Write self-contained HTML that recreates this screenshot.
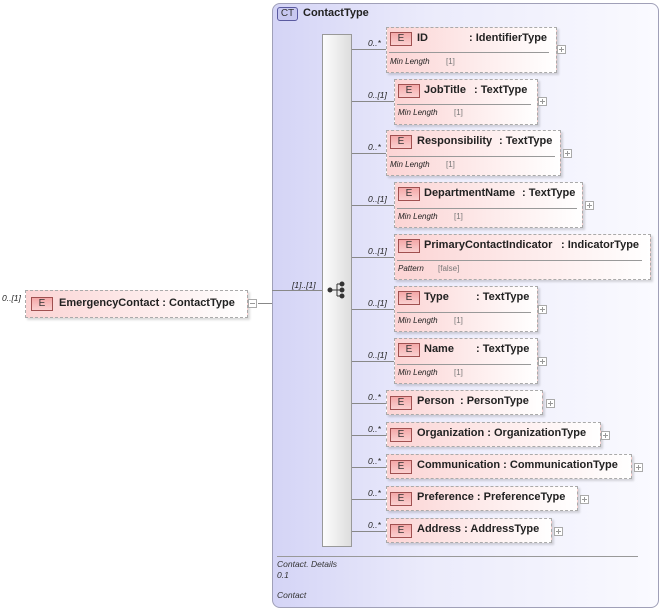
<!DOCTYPE html>
<html><head><meta charset="utf-8"><style>
*{margin:0;padding:0;box-sizing:border-box}
body{width:662px;height:610px;background:#fff;position:relative;overflow:hidden;font-family:"Liberation Sans",Arial,sans-serif;color:#222}
.abs{position:absolute}
.ct{left:272px;top:3px;width:387px;height:605px;border:1px solid #a0a0b8;border-radius:8px;background:linear-gradient(to right,#d4d4f6 0%,#ebebfb 40%,#fafaff 100%)}
.ctb{left:277px;top:7px;width:21px;height:14px;border:1px solid #5a5aa0;border-radius:3px;background:#c8c8f0;font-size:10px;text-align:center;line-height:12px;color:#333}
.ctt{left:303px;top:7px;font-size:11px;font-weight:bold}
.seq{left:322px;top:34px;width:30px;height:513px;border:1px solid #999;background:linear-gradient(to right,#fdfdfd,#ddd)}
.box{position:absolute;border:1px dashed #aaa;background:linear-gradient(to right,#fcd4d4,#fdeaea 50%,#fff);box-shadow:2px 2px 2px rgba(0,0,0,.15)}
.e{position:absolute;width:22px;height:14px;border:1px solid #a05050;background:linear-gradient(#f4a8a8,#fad0d0);font-size:10px;text-align:center;line-height:12px;color:#333}
.t{position:absolute;font-size:11px;font-weight:bold;white-space:nowrap}
.sep{position:absolute;height:1px;background:#999}
.d{position:absolute;font-size:8px;font-style:italic;white-space:nowrap}
.dv{position:absolute;font-size:8px;color:#777;white-space:nowrap}
.hl{position:absolute;height:1px;background:#888}
.m{position:absolute;font-size:8.5px;font-style:italic;white-space:nowrap}
.pl{position:absolute;width:9px;height:9px;border:1px solid #aaa;background:#fff}
.pl:before{content:"";position:absolute;left:1px;top:3px;width:5px;height:1px;background:#999}
.pl.p:after{content:"";position:absolute;left:3px;top:1px;width:1px;height:5px;background:#999}
.f{position:absolute;font-size:8.5px;font-style:italic;color:#333}
</style></head><body>
<div class="abs ct"></div>
<div class="abs ctb">CT</div>
<div class="abs ctt">ContactType</div>
<div class="abs seq"></div>
<svg class="abs" style="left:326px;top:280px" width="22" height="20"><g stroke="#333" fill="#333"><line x1="4" y1="10" x2="11" y2="10"/><line x1="11" y1="4" x2="11" y2="16"/><line x1="11" y1="4" x2="16" y2="4"/><line x1="11" y1="10" x2="16" y2="10"/><line x1="11" y1="16" x2="16" y2="16"/><circle cx="4" cy="10" r="2"/><circle cx="16" cy="4" r="2"/><circle cx="16" cy="10" r="2"/><circle cx="16" cy="16" r="2"/></g></svg>

<div class="m" style="left:2px;top:293px">0..[1]</div>
<div class="box" style="left:25px;top:290px;width:223px;height:28px"></div>
<div class="e" style="left:31px;top:297px">E</div>
<div class="t" style="left:59px;top:297px">EmergencyContact : ContactType</div>
<div class="pl" style="left:248px;top:299px"></div>
<div class="hl" style="left:258px;top:303px;width:14px"></div>
<div class="hl" style="left:272px;top:290px;width:50px"></div>
<div class="m" style="left:292px;top:280px">[1]..[1]</div>

<div class="hl" style="left:352px;top:49px;width:34px"></div>
<div class="hl" style="left:352px;top:101px;width:42px"></div>
<div class="hl" style="left:352px;top:153px;width:34px"></div>
<div class="hl" style="left:352px;top:205px;width:42px"></div>
<div class="hl" style="left:352px;top:257px;width:42px"></div>
<div class="hl" style="left:352px;top:309px;width:42px"></div>
<div class="hl" style="left:352px;top:361px;width:42px"></div>
<div class="hl" style="left:352px;top:403px;width:34px"></div>
<div class="hl" style="left:352px;top:435px;width:34px"></div>
<div class="hl" style="left:352px;top:467px;width:34px"></div>
<div class="hl" style="left:352px;top:499px;width:34px"></div>
<div class="hl" style="left:352px;top:531px;width:34px"></div>

<div class="m" style="left:368px;top:38px">0..*</div>
<div class="m" style="left:368px;top:90px">0..[1]</div>
<div class="m" style="left:368px;top:142px">0..*</div>
<div class="m" style="left:368px;top:194px">0..[1]</div>
<div class="m" style="left:368px;top:246px">0..[1]</div>
<div class="m" style="left:368px;top:298px">0..[1]</div>
<div class="m" style="left:368px;top:350px">0..[1]</div>
<div class="m" style="left:368px;top:392px">0..*</div>
<div class="m" style="left:368px;top:424px">0..*</div>
<div class="m" style="left:368px;top:456px">0..*</div>
<div class="m" style="left:368px;top:488px">0..*</div>
<div class="m" style="left:368px;top:520px">0..*</div>

<div class="box" style="left:386px;top:27px;width:171px;height:46px"></div>
<div class="e" style="left:390px;top:32px">E</div>
<div class="t" style="left:417px;top:32px">ID</div><div class="t" style="left:469px;top:32px">: IdentifierType</div>
<div class="sep" style="left:389px;top:52px;width:160px"></div>
<div class="d" style="left:390px;top:57px">Min Length</div><div class="dv" style="left:446px;top:57px">[1]</div>
<div class="pl p" style="left:557px;top:45px"></div>

<div class="box" style="left:394px;top:79px;width:144px;height:46px"></div>
<div class="e" style="left:398px;top:84px">E</div>
<div class="t" style="left:424px;top:84px">JobTitle</div><div class="t" style="left:474px;top:84px">: TextType</div>
<div class="sep" style="left:397px;top:104px;width:134px"></div>
<div class="d" style="left:398px;top:108px">Min Length</div><div class="dv" style="left:454px;top:108px">[1]</div>
<div class="pl p" style="left:538px;top:97px"></div>

<div class="box" style="left:386px;top:130px;width:175px;height:46px"></div>
<div class="e" style="left:390px;top:135px">E</div>
<div class="t" style="left:417px;top:135px">Responsibility</div><div class="t" style="left:499px;top:135px">: TextType</div>
<div class="sep" style="left:389px;top:156px;width:166px"></div>
<div class="d" style="left:390px;top:160px">Min Length</div><div class="dv" style="left:446px;top:160px">[1]</div>
<div class="pl p" style="left:563px;top:149px"></div>

<div class="box" style="left:394px;top:182px;width:189px;height:46px"></div>
<div class="e" style="left:398px;top:187px">E</div>
<div class="t" style="left:424px;top:187px">DepartmentName</div><div class="t" style="left:522px;top:187px">: TextType</div>
<div class="sep" style="left:397px;top:208px;width:180px"></div>
<div class="d" style="left:398px;top:212px">Min Length</div><div class="dv" style="left:454px;top:212px">[1]</div>
<div class="pl p" style="left:585px;top:201px"></div>

<div class="box" style="left:394px;top:234px;width:257px;height:46px"></div>
<div class="e" style="left:398px;top:239px">E</div>
<div class="t" style="left:424px;top:239px">PrimaryContactIndicator</div><div class="t" style="left:561px;top:239px">: IndicatorType</div>
<div class="sep" style="left:397px;top:260px;width:245px"></div>
<div class="d" style="left:398px;top:264px">Pattern</div><div class="dv" style="left:438px;top:264px">[false]</div>

<div class="box" style="left:394px;top:286px;width:144px;height:46px"></div>
<div class="e" style="left:398px;top:291px">E</div>
<div class="t" style="left:424px;top:291px">Type</div><div class="t" style="left:476px;top:291px">: TextType</div>
<div class="sep" style="left:397px;top:312px;width:134px"></div>
<div class="d" style="left:398px;top:316px">Min Length</div><div class="dv" style="left:454px;top:316px">[1]</div>
<div class="pl p" style="left:538px;top:305px"></div>

<div class="box" style="left:394px;top:338px;width:144px;height:46px"></div>
<div class="e" style="left:398px;top:343px">E</div>
<div class="t" style="left:424px;top:343px">Name</div><div class="t" style="left:476px;top:343px">: TextType</div>
<div class="sep" style="left:397px;top:364px;width:134px"></div>
<div class="d" style="left:398px;top:368px">Min Length</div><div class="dv" style="left:454px;top:368px">[1]</div>
<div class="pl p" style="left:538px;top:357px"></div>

<div class="box" style="left:386px;top:390px;width:157px;height:25px"></div>
<div class="e" style="left:390px;top:396px">E</div>
<div class="t" style="left:417px;top:395px">Person</div><div class="t" style="left:460px;top:395px">: PersonType</div>
<div class="pl p" style="left:546px;top:399px"></div>

<div class="box" style="left:386px;top:422px;width:215px;height:25px"></div>
<div class="e" style="left:390px;top:428px">E</div>
<div class="t" style="left:417px;top:427px">Organization : OrganizationType</div>
<div class="pl p" style="left:601px;top:431px"></div>

<div class="box" style="left:386px;top:454px;width:246px;height:25px"></div>
<div class="e" style="left:390px;top:460px">E</div>
<div class="t" style="left:417px;top:459px">Communication : CommunicationType</div>
<div class="pl p" style="left:634px;top:463px"></div>

<div class="box" style="left:386px;top:486px;width:192px;height:25px"></div>
<div class="e" style="left:390px;top:492px">E</div>
<div class="t" style="left:417px;top:491px">Preference : PreferenceType</div>
<div class="pl p" style="left:580px;top:495px"></div>

<div class="box" style="left:386px;top:518px;width:166px;height:25px"></div>
<div class="e" style="left:390px;top:524px">E</div>
<div class="t" style="left:417px;top:523px">Address : AddressType</div>
<div class="pl p" style="left:554px;top:527px"></div>

<div class="hl" style="left:277px;top:556px;width:361px;background:#999"></div>
<div class="f" style="left:277px;top:559px">Contact. Details</div>
<div class="f" style="left:277px;top:570px">0.1</div>
<div class="f" style="left:277px;top:590px">Contact</div>
</body></html>
